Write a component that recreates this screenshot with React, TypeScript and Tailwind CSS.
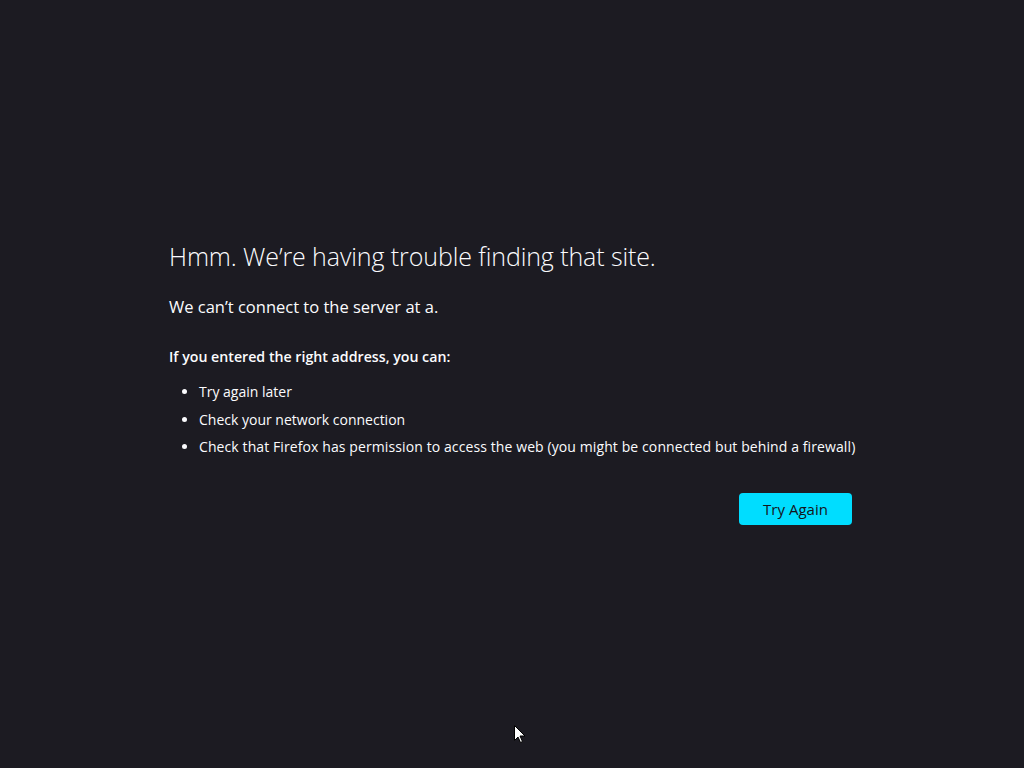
import React from "react";

export default function App() {
  return (
    <div
      className="relative flex min-h-screen w-full items-center bg-[#1c1b22] pb-[2px] text-[#fbfbfe]"
      style={{ fontFamily: '"Open Sans", "Noto Sans", sans-serif' }}
    >
      <div className="ml-[169px] w-[683px]">
        <h1 className="text-[25px] font-light leading-[30px] tracking-[-0.1px]">
          Hmm. We’re having trouble finding that site.
        </h1>
        <p className="mt-[24px] text-[16.5px] leading-[24px]">
          We can’t connect to the server at a.
        </p>
        <p className="mt-[27px] text-[14.2px] font-semibold leading-[22px]">
          If you entered the right address, you can:
        </p>
        <ul className="mt-[13px] flex flex-col gap-[5.5px] pl-[30px] text-[14px] leading-[22px]">
          <li className="list-disc">Try again later</li>
          <li className="list-disc">Check your network connection</li>
          <li className="list-disc whitespace-nowrap tracking-[0.1px]">
            Check that Firefox has permission to access the web (you might be connected but behind a firewall)
          </li>
        </ul>
        <div className="mt-[35px] flex justify-end">
          <button className="h-[32px] w-[113px] rounded-[4px] bg-[#00ddff] text-[15px] text-[#15141a]">
            Try Again
          </button>
        </div>
      </div>
      <svg
        className="absolute left-[514px] top-[725px]"
        width="12"
        height="19"
        viewBox="0 0 12 19"
      >
        <path d="M0.5 0.5 L0.5 15.5 L4 12 L6.5 17.5 L8.5 16.5 L6 11 L11 11 Z" fill="#ffffff" stroke="#000" strokeWidth="1" />
      </svg>
    </div>
  );
}
